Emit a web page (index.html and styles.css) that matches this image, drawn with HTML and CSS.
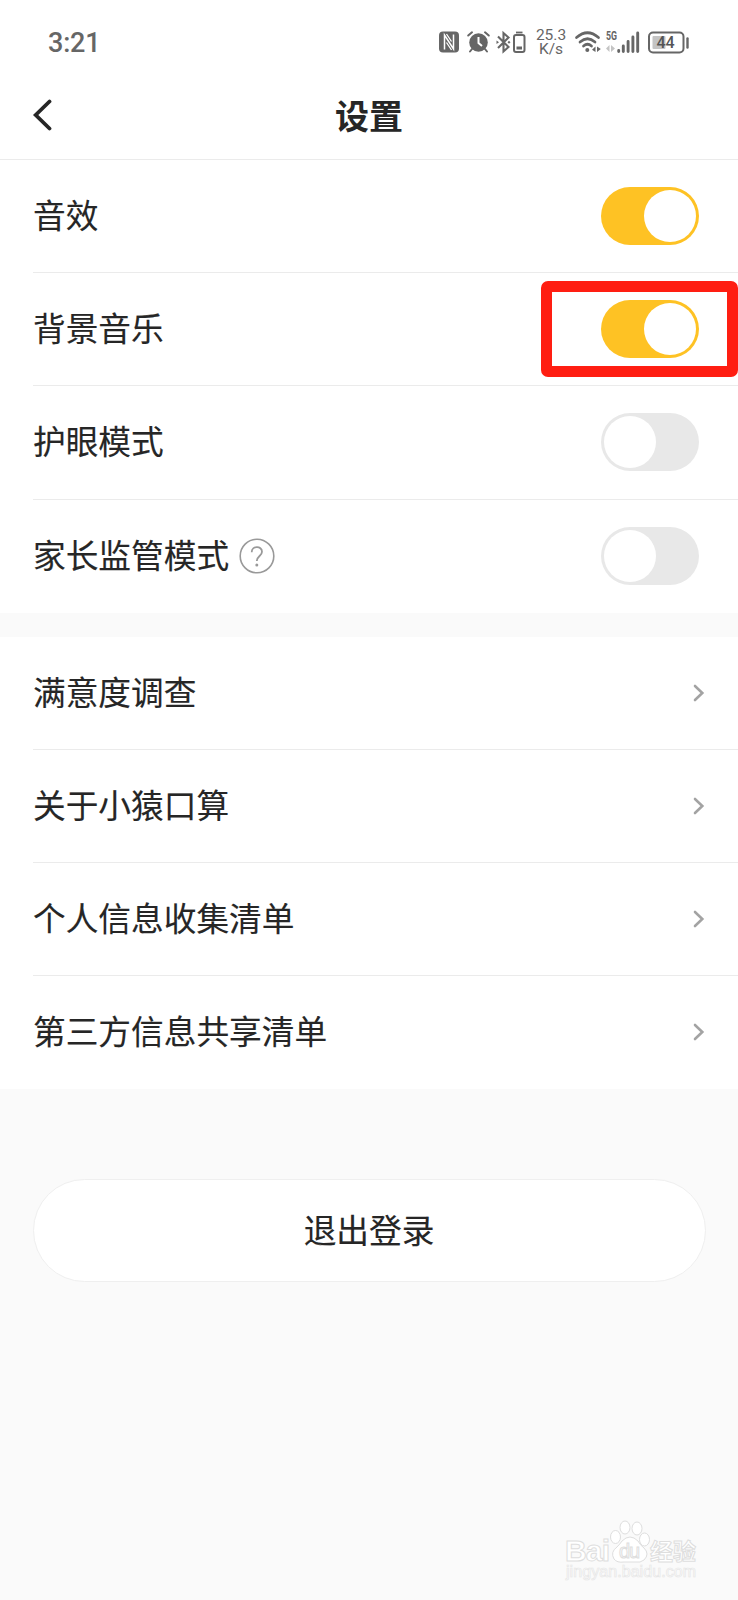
FILE: index.html
```
<!DOCTYPE html>
<html lang="zh-CN">
<head>
  <meta charset="UTF-8">
  <title>设置</title>
  <link rel="stylesheet" href="styles.css">
</head>
<body>
  <div class="page">
    <div class="status-bar">
      <span class="time">3:21</span>
      <div class="status-icons">
        <svg class="nfc" width="20" height="22" viewBox="0 0 20 22">
          <rect x="0" y="0.5" width="20" height="21" rx="4" fill="#666"/>
          <path d="M5.500 18.500V4L14.500 18V3.500" fill="none" stroke="#fff" stroke-width="1.500"/>
          <path d="M7.500 3L12.500 10.500M7.500 11.500L12.500 19" stroke="#fff" stroke-width="1.300"/>
        </svg>
        <svg class="alarm" width="23" height="22" viewBox="0 0 23 22">
          <circle cx="11.500" cy="11.500" r="9.300" fill="#666"/>
          <path d="M1.200 4.500L5 1.300M21.800 4.500L18 1.300M5 18L3 20.500M18 18L20 20.500" stroke="#666" stroke-width="2" stroke-linecap="round"/>
          <path d="M11.500 6V12L15 15" fill="none" stroke="#fff" stroke-width="2"/>
        </svg>
        <svg class="bluetooth" width="30" height="23" viewBox="0 0 30 23">
          <path d="M2 5.500L12.500 16L7.500 20.500V2L12.500 6.500L2 17" fill="none" stroke="#666" stroke-width="2.100"/>
          <path d="M0.500 9.500L3 11.200L0.500 13zM11.500 11.200L13 9.700L14.500 11.200L13 12.700z" fill="#666"/>
          <rect x="18" y="4" width="10.500" height="17" rx="2" fill="none" stroke="#666" stroke-width="2"/>
          <path d="M20 1.500H26.500" stroke="#666" stroke-width="1.800"/>
          <rect x="20.500" y="15.500" width="5.500" height="3" fill="#666"/>
        </svg>
        <div class="speed"><span>25.3</span><span>K/s</span></div>
        <svg class="wifi" width="26" height="22" viewBox="0 0 26 22">
          <g fill="none" stroke="#666" stroke-width="2.700" stroke-linecap="round">
            <path d="M1.500 6.500Q12.500 -3 23.500 6.500"/>
            <path d="M5 11Q12.500 4.500 20 11"/>
            <path d="M8.500 15Q12.500 11.500 16.500 15"/>
          </g>
          <circle cx="12.300" cy="19" r="2" fill="#666"/>
          <path d="M17 18.800L20.500 15.500V21zM22 15.500V21L25.800 18z" fill="#666"/>
        </svg>
        <svg class="signal" width="34" height="22" viewBox="0 0 34 22">
          <text x="0" y="9" class="net" textLength="11" lengthAdjust="spacingAndGlyphs">5G</text>
          <path d="M0 17.500L3.500 14V21zM5 14V21L9 17.500z" fill="#c4c4c4"/>
          <path d="M12.700 19.500V20.500M17.300 15V20.500M22.100 10.500V20.500M26.900 6V20.500M31.700 2V20.500" stroke="#666" stroke-width="2.900" stroke-linecap="round"/>
        </svg>
        <svg class="battery" width="42" height="23" viewBox="0 0 42 23">
          <rect x="1" y="1.500" width="34.500" height="20" rx="4" fill="none" stroke="#666" stroke-width="2"/>
          <rect x="4.500" y="5" width="13" height="13" rx="1" fill="#c4c4c4"/>
          <path d="M39.500 7.500V16.500" stroke="#666" stroke-width="2.400" stroke-linecap="round"/>
          <text x="8.500" y="17" class="level">44</text>
        </svg>
      </div>
    </div>

    <div class="header">
      <svg class="back" width="20" height="32" viewBox="0 0 20 32">
        <path d="M17.500 2.500L3.700 16L17.500 29.500" fill="none" stroke="#262626" stroke-width="3.800" stroke-linecap="round" stroke-linejoin="miter"/>
      </svg>
      <h1>设置</h1>
    </div>

    <div class="group">
      <div class="row"><span>音效</span><div class="toggle on"></div></div>
      <div class="row marked"><span>背景音乐</span><div class="toggle on"></div></div>
      <div class="row tall"><span>护眼模式</span><div class="toggle"></div></div>
      <div class="row raised">
        <span>家长监管模式</span>
        <svg class="help" width="36" height="36" viewBox="0 0 36 36">
          <circle cx="18" cy="18" r="16.800" fill="none" stroke="#999" stroke-width="1.600"/>
          <path d="M12.700 14.200C12.700 7.500 23 7.500 23 13.700C23 18 17.800 18 17.800 23" fill="none" stroke="#999" stroke-width="1.800"/>
          <circle cx="17.800" cy="27" r="1.500" fill="#999"/>
        </svg>
        <div class="toggle"></div>
      </div>
    </div>

    <div class="group">
      <div class="row"><span>满意度调查</span><svg class="arrow" width="12" height="18" viewBox="0 0 12 18"><path d="M2 2L9.300 9L2 16"/></svg></div>
      <div class="row"><span>关于小猿口算</span><svg class="arrow" width="12" height="18" viewBox="0 0 12 18"><path d="M2 2L9.300 9L2 16"/></svg></div>
      <div class="row"><span>个人信息收集清单</span><svg class="arrow" width="12" height="18" viewBox="0 0 12 18"><path d="M2 2L9.300 9L2 16"/></svg></div>
      <div class="row raised"><span>第三方信息共享清单</span><svg class="arrow" width="12" height="18" viewBox="0 0 12 18"><path d="M2 2L9.300 9L2 16"/></svg></div>
    </div>

    <button class="logout">退出登录</button>

    <svg class="watermark" width="136" height="66" viewBox="0 0 136 66">
      <g fill="#fff" stroke="#dedede" stroke-width="1">
        <text x="1" y="41.500" class="brand" textLength="45">Bai</text>
        <ellipse cx="51.500" cy="18" rx="5" ry="6.500"/>
        <ellipse cx="61" cy="8.500" rx="5" ry="6.500"/>
        <ellipse cx="73" cy="9.500" rx="5" ry="6.500"/>
        <ellipse cx="80.500" cy="20.500" rx="5" ry="6.500"/>
        <path d="M58 22Q66 14 74 22Q76 26 80 29Q86 35 80 41Q77 44 70 43H60Q53 44 50 40Q46 33 53 28Q56 25 58 22Z"/>
        <text x="55" y="39" class="du" textLength="21">du</text>
        <text x="86" y="41" class="cn">经验</text>
      </g>
      <text x="2" y="58" class="site" textLength="130">jingyan.baidu.com</text>
    </svg>
  </div>
</body>
</html>
```
FILE: styles.css
```
*,
*::before,
*::after {
  box-sizing: border-box;
}

body {
  margin: 0;
  background-color: #fafafa;
  color: #262626;
  font-family: "Noto Sans CJK SC", sans-serif;
}

.page {
  position: relative;
  width: 738px;
  height: 1600px;
  overflow: hidden;
}

.status-bar {
  display: flex;
  justify-content: space-between;
  align-items: center;
  height: 72px;
  padding: 12px 48px 0 48px;
  background-color: #fff;
  color: #666;
  font-family: Roboto, sans-serif;
}

.time {
  padding-top: 2px;
  font-size: 27px;
  font-weight: 500;
  letter-spacing: -0.2px;
}

.status-icons {
  display: flex;
  align-items: center;
}

.status-icons svg {
  overflow: visible;
}

.alarm {
  margin-left: 8px;
}

.bluetooth {
  margin-left: 6px;
}

.speed {
  display: flex;
  flex-direction: column;
  align-items: center;
  width: 32px;
  margin-left: 9px;
  font-size: 15.5px;
  line-height: 14.5px;
}

.wifi {
  margin-left: 8px;
}

.signal {
  margin-left: 5px;
}

.net {
  font-size: 12px;
  font-weight: 700;
  fill: #666;
}

.battery {
  margin-left: 8px;
}

.level {
  font-size: 16px;
  font-weight: 500;
  fill: #555;
}

.header {
  display: grid;
  grid-template-columns: 40px 1fr 40px;
  align-items: center;
  height: 88px;
  padding: 0 32px 1px;
  background-color: #fff;
  border-bottom: 1px solid #ebebeb;
}

.back {
  margin-bottom: 1px;
}

.header h1 {
  margin: 0;
  padding-bottom: 1px;
  font-size: 34px;
  font-weight: 700;
  line-height: 44px;
  text-align: center;
}

.group {
  background-color: #fff;
  padding-left: 33px;
  margin-bottom: 24px;
}

.row {
  display: flex;
  align-items: center;
  height: 113px;
  padding-right: 39px;
  border-bottom: 1px solid #ebebeb;
  font-size: 32.7px;
  line-height: 48px;
}

.row span {
  padding-bottom: 4px;
  -webkit-text-stroke: 0.15px #262626;
}

.row.tall {
  height: 114px;
  padding-bottom: 1px;
}

.row.raised {
  padding-bottom: 2px;
}

.row:last-child {
  border-bottom: none;
}

.help {
  margin-left: 10px;
}

.toggle {
  width: 98px;
  height: 58px;
  margin-left: auto;
  padding: 3px;
  border-radius: 29px;
  background-color: #e8e8e8;
}

.toggle::after {
  content: "";
  display: block;
  width: 52px;
  height: 52px;
  border-radius: 50%;
  background-color: #fff;
}

.toggle.on {
  background-color: #fec224;
}

.toggle.on::after {
  margin-left: auto;
}

/* red frame around the switch */
.marked {
  position: relative;
}

.marked::after {
  content: "";
  position: absolute;
  top: 8px;
  right: 0;
  width: 197px;
  height: 96px;
  border: 11px solid #ff1e12;
  border-radius: 7px;
}

.arrow {
  margin-left: auto;
  margin-right: -6px;
}

.arrow path {
  fill: none;
  stroke: #a3a3a3;
  stroke-width: 2.6;
  stroke-linecap: round;
}

.logout {
  display: block;
  width: 673px;
  height: 103px;
  margin: 90px auto 0;
  padding: 0 0 5px;
  border: 1px solid #efefef;
  border-radius: 52px;
  background-color: #fff;
  color: #262626;
  font-family: inherit;
  font-size: 32.7px;
  -webkit-text-stroke: 0.15px #262626;
}

.watermark {
  position: absolute;
  right: 38px;
  bottom: 15px;
  font-family: "Liberation Sans", sans-serif;
}

.brand {
  font-size: 30px;
  font-weight: 700;
}

.du {
  font-size: 20px;
}

.cn {
  font-family: "Noto Sans CJK SC", sans-serif;
  font-size: 23px;
  font-weight: 700;
}

.site {
  font-size: 16px;
  fill: #fff;
  stroke: #e6e6e6;
  stroke-width: 0.7;
}
```
